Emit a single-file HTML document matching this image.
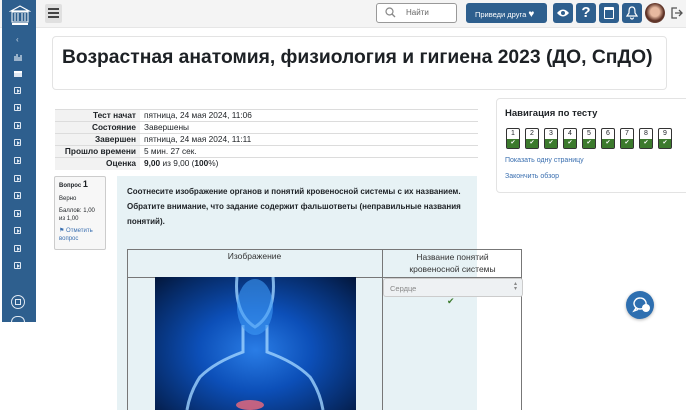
<!DOCTYPE html>
<html><head><meta charset="utf-8">
<style>
*{box-sizing:border-box;margin:0;padding:0}
html,body{width:686px;height:410px;overflow:hidden}
body{background:#fff;font-family:"Liberation Sans",sans-serif;color:#1d2125;position:relative}
.abs{position:absolute}
.top{left:0;top:0;width:686px;height:28px;background:#f4f4f4;border-bottom:1px solid #e6e6e6}
.side{left:2px;top:0;width:34px;height:322px;background:#2e5f8e}
.si{position:absolute;left:14px;width:7px;height:7px;border:1px solid #dfe8f2;border-radius:1px}
.si:after{content:"";position:absolute;left:2px;top:1px;border-left:3px solid #dfe8f2;border-top:2px solid transparent;border-bottom:2px solid transparent}
.btn{background:#2e5f8e;border-radius:3px;color:#fff}
.card{border:1px solid #e3e3e3;border-radius:4px;background:#fff}
table.sum{border-collapse:collapse;font-size:8.3px}
table.sum td{height:12px;border-top:1px solid #dcdcdc;padding:0 4px;line-height:11px;white-space:nowrap}
table.sum td.h{text-align:right;font-weight:bold;background:#f2f2f2;width:85px}
.nb{position:absolute;top:128px;width:14px;height:21px;border:1px solid #333;border-radius:2px;background:#fff;font-size:7px;text-align:center;line-height:10px}
.nb b{position:absolute;left:0;right:0;bottom:0;height:9px;background:#3c7a2d;color:#fff;font-size:6px;line-height:9px;font-weight:normal}
a{color:#3a6fb0;text-decoration:none}
</style></head><body>
<div class="abs top"></div>
<div class="abs side"></div>
<svg class="abs" style="left:9px;top:4px" width="22" height="22" viewBox="0 0 22 22"><path d="M2 7 L11 2 L20 7 Z" fill="none" stroke="#fff" stroke-width="1.2"/><rect x="3" y="8" width="16" height="10" fill="none" stroke="#fff" stroke-width="1"/><path d="M6 9v8M9 9v8M13 9v8M16 9v8" stroke="#fff" stroke-width="1"/><rect x="3" y="19" width="16" height="2" fill="#fff"/></svg>
<div class="abs" style="left:16px;top:35px;color:#cfdbe8;font-size:8px">‹</div>
<svg class="abs" style="left:13px;top:53px" width="10" height="8"><path d="M1 7h8M2 6V3M4 6V1M6 6V4M8 6V2" stroke="#dfe8f2" stroke-width="1.2"/></svg>
<div class="abs" style="left:14px;top:71px;width:8px;height:6px;background:#dfe8f2;border-top:2px solid #fff"></div>
<div class="si" style="top:87px"></div><div class="si" style="top:104px"></div><div class="si" style="top:122px"></div><div class="si" style="top:139px"></div><div class="si" style="top:157px"></div><div class="si" style="top:175px"></div><div class="si" style="top:192px"></div><div class="si" style="top:210px"></div><div class="si" style="top:227px"></div><div class="si" style="top:245px"></div><div class="si" style="top:262px"></div>
<div class="abs" style="left:11px;top:295px;width:14px;height:14px;border:1px solid #dfe8f2;border-radius:50%"></div>
<div class="abs" style="left:15px;top:299px;width:6px;height:6px;border:1px solid #dfe8f2"></div>
<div class="abs" style="left:11px;top:316px;width:14px;height:6px;border:1px solid #dfe8f2;border-bottom:none;border-radius:7px 7px 0 0"></div>
<div class="abs" style="left:45px;top:4px;width:17px;height:19px;background:#e0e0e0;border-radius:2px"></div>
<div class="abs" style="left:48px;top:8px;width:11px;height:2px;background:#444;box-shadow:0 4px 0 #444,0 8px 0 #444"></div>
<div class="abs" style="left:376px;top:3px;width:81px;height:20px;border:1px solid #999;border-radius:3px;background:#fff"></div>
<svg class="abs" style="left:385px;top:7px" width="11" height="11"><circle cx="4.5" cy="4.5" r="3.5" fill="none" stroke="#888" stroke-width="1.2"/><path d="M7 7l3 3" stroke="#888" stroke-width="1.3"/></svg>
<div class="abs" style="left:406px;top:8px;font-size:8px;color:#666">Найти</div>
<div class="abs btn" style="left:466px;top:3px;width:81px;height:20px;font-size:7.5px;padding:6px 0 0 9px">Приведи друга <span style="font-size:10px">♥</span></div>
<div class="abs btn" style="left:553px;top:3px;width:20px;height:20px"></div>
<svg class="abs" style="left:556px;top:8px" width="14" height="10"><path d="M1 5Q7 -2 13 5Q7 12 1 5Z" fill="#fff"/><circle cx="7" cy="5" r="2" fill="#2e5f8e"/></svg>
<div class="abs btn" style="left:576px;top:3px;width:20px;height:20px;font-weight:bold;font-size:15px;text-align:center;line-height:20px">?</div>
<div class="abs btn" style="left:599px;top:3px;width:20px;height:20px"></div>
<div class="abs" style="left:604px;top:7px;width:10px;height:12px;border:1.3px solid #fff;border-radius:1px;border-top-width:3px"></div>
<div class="abs btn" style="left:622px;top:3px;width:20px;height:20px"></div>
<svg class="abs" style="left:626px;top:6px" width="12" height="14"><path d="M6 1C3 1 3 4 3 7L1 10H11L9 7C9 4 9 1 6 1Z M4.5 11.5a1.5 1.5 0 0 0 3 0" fill="none" stroke="#fff" stroke-width="1.2"/></svg>
<div class="abs" style="left:645px;top:3px;width:20px;height:20px;border-radius:50%;background:radial-gradient(circle at 50% 45%,#e7b9a0 30%,#5a2e22 60%,#8a6a60)"></div>
<svg class="abs" style="left:669px;top:6px" width="14" height="14"><path d="M8 2H3V12H8 M6 7H13 M10 4L13 7L10 10" fill="none" stroke="#555" stroke-width="1.3"/></svg>
<div class="abs card" style="left:52px;top:36px;width:615px;height:54px"></div>
<div class="abs" style="left:62px;top:47px;font-size:19.3px;font-weight:bold;color:#1d2125;white-space:nowrap">Возрастная анатомия, физиология и гигиена 2023 (ДО, СпДО)</div>
<table class="abs sum" style="left:55px;top:109px;width:423px">
<tr><td class="h">Тест начат</td><td>пятница, 24 мая 2024, 11:06</td></tr>
<tr><td class="h">Состояние</td><td>Завершены</td></tr>
<tr><td class="h">Завершен</td><td>пятница, 24 мая 2024, 11:11</td></tr>
<tr><td class="h">Прошло времени</td><td>5 мин. 27 сек.</td></tr>
<tr><td class="h">Оценка</td><td><b>9,00</b> из 9,00 (<b>100</b>%)</td></tr>
</table>
<div class="abs" style="left:54px;top:176px;width:52px;height:74px;border:1px solid #ccc;border-radius:2px;background:#f7f7f7;font-size:6px;padding:4px 4px;line-height:7.5px">
<div style="font-weight:bold">Вопрос <span style="font-size:9px">1</span></div>
<div style="margin-top:5px">Верно</div>
<div style="margin-top:5px">Баллов: 1,00 из 1,00</div>
<div style="margin-top:5px;color:#3a6fb0">⚑ Отметить вопрос</div>
</div>
<div class="abs" style="left:117px;top:176px;width:360px;height:234px;background:#e7f2f5"></div>
<div class="abs" style="left:127px;top:184px;width:345px;font-size:8px;font-weight:bold;line-height:15px">Соотнесите изображение органов и понятий кровеносной системы с их названием. Обратите внимание, что задание содержит фальшответы (неправильные названия понятий).</div>
<div class="abs" style="left:127px;top:249px;width:395px;height:161px;border:1px solid #777;border-bottom:none"></div>
<div class="abs" style="left:127px;top:277px;width:395px;height:1px;background:#777"></div>
<div class="abs" style="left:382px;top:249px;width:1px;height:161px;background:#777"></div>
<div class="abs" style="left:127px;top:251px;width:255px;text-align:center;font-size:8.5px;color:#333">Изображение</div>
<div class="abs" style="left:393px;top:251px;width:119px;text-align:center;font-size:8.5px;color:#333;line-height:12px">Название понятий кровеносной системы</div>
<div class="abs" style="left:155px;top:277px;width:201px;height:133px;background:radial-gradient(ellipse at 50% 55%,#2a7de6 0%,#0c4fb8 40%,#062a66 80%,#03163a)"></div>
<svg class="abs" style="left:155px;top:277px" width="201" height="133"><path d="M82 0C80 20 84 40 100 50C116 40 120 20 118 0 M88 48V75Q60 85 45 100Q35 115 32 133 M112 48V75Q140 85 155 100Q165 115 168 133" fill="none" stroke="#9fd3ff" stroke-width="3" opacity=".8"/><ellipse cx="100" cy="30" rx="18" ry="28" fill="#3d9af5" opacity=".6"/><ellipse cx="95" cy="128" rx="14" ry="5" fill="#f06a7a" opacity=".8"/></svg>
<div class="abs" style="left:383px;top:278px;width:140px;height:19px;border:1px solid #ccc;border-radius:3px;background:#eef1f3;font-size:7.5px;color:#888;padding:5px 0 0 6px">Сердце<span style="position:absolute;right:5px;top:3px;font-size:6px;line-height:5px">▴<br>▾</span></div>
<div class="abs" style="left:447px;top:296px;font-size:9px;color:#3c7a2d">✔</div>
<div class="abs card" style="left:496px;top:98px;width:196px;height:95px"></div>
<div class="abs" style="left:505px;top:108px;font-size:9.5px;font-weight:bold">Навигация по тесту</div>
<div class="nb" style="left:506px">1<b>✔</b></div><div class="nb" style="left:525px">2<b>✔</b></div><div class="nb" style="left:544px">3<b>✔</b></div><div class="nb" style="left:563px">4<b>✔</b></div><div class="nb" style="left:582px">5<b>✔</b></div><div class="nb" style="left:601px">6<b>✔</b></div><div class="nb" style="left:620px">7<b>✔</b></div><div class="nb" style="left:639px">8<b>✔</b></div><div class="nb" style="left:658px">9<b>✔</b></div>
<div class="abs" style="left:505px;top:157px;font-size:7px"><a>Показать одну страницу</a></div>
<div class="abs" style="left:505px;top:173px;font-size:7px"><a>Закончить обзор</a></div>
<div class="abs" style="left:626px;top:291px;width:28px;height:28px;border-radius:50%;background:#2e6fb0;box-shadow:0 1px 3px rgba(0,0,0,.3)"></div>
<svg class="abs" style="left:631px;top:296px" width="20" height="18"><path d="M9 2a6 5.5 0 1 0 0.1 0 M5 12l-2 3 4-1.5" fill="none" stroke="#fff" stroke-width="1.4"/><circle cx="15" cy="12" r="4" fill="#fff"/></svg>
</body></html>
